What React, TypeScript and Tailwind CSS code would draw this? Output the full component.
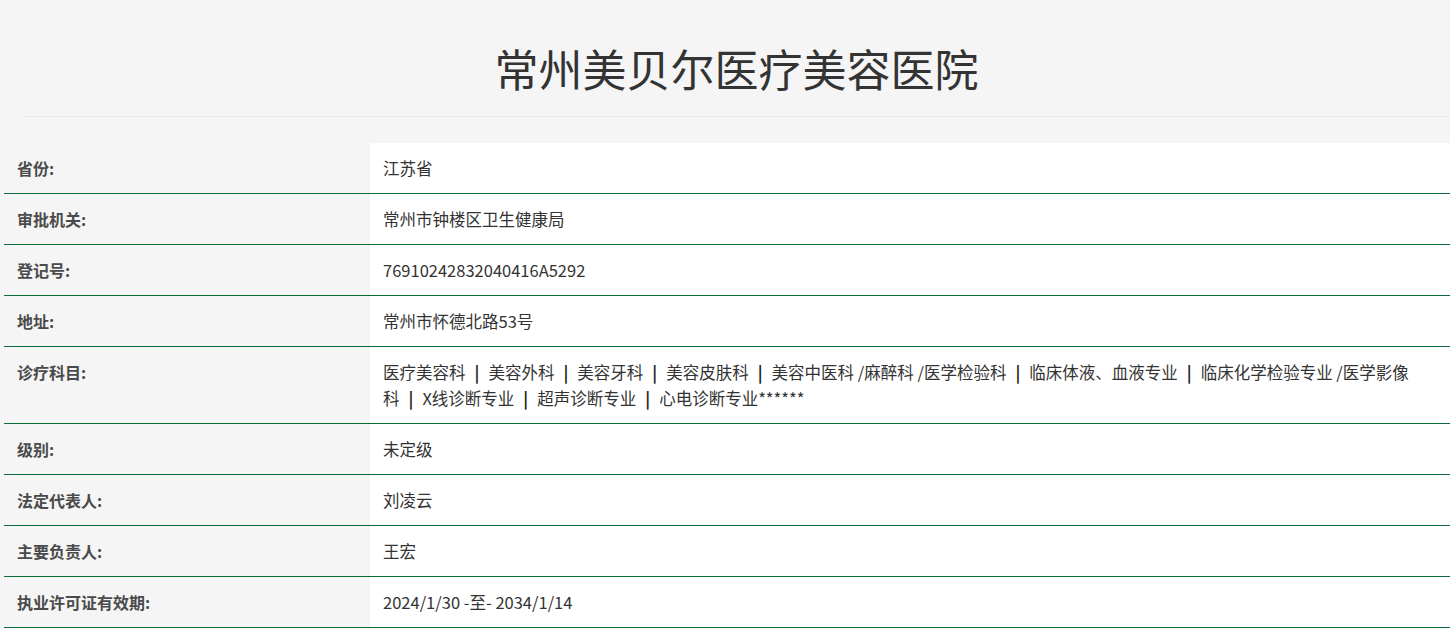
const rows: [string, string][] = [
  ["省份:", "江苏省"],
  ["审批机关:", "常州市钟楼区卫生健康局"],
  ["登记号:", "76910242832040416A5292"],
  ["地址:", "常州市怀德北路53号"],
  [
    "诊疗科目:",
    "医疗美容科|美容外科|美容牙科|美容皮肤科|美容中医科 /麻醉科 /医学检验科|临床体液、血液专业|临床化学检验专业 /医学影像科|X线诊断专业|超声诊断专业|心电诊断专业******",
  ],
  ["级别:", "未定级"],
  ["法定代表人:", "刘凌云"],
  ["主要负责人:", "王宏"],
  ["执业许可证有效期:", "2024/1/30 -至- 2034/1/14"],
];

function Value({ text }: { text: string }) {
  const parts = text.split("|");
  return (
    <>
      {parts.map((p, i) => (
        <span key={i}>
          {i > 0 && <span className="mx-[9px] font-bold text-[#222]">|</span>}
          {p}
        </span>
      ))}
    </>
  );
}

export default function App() {
  return (
    <div
      className="min-h-[629px] bg-[#f5f5f5] text-[#333]"
      style={{ fontFamily: '"Noto Sans CJK SC","Noto Sans",sans-serif' }}
    >
      <div className="ml-[23px] flex h-[117px] items-center justify-center border-b border-[#e8e8e8] pt-[20px]">
        <h1 className="text-[44px] font-normal text-[#333]">常州美贝尔医疗美容医院</h1>
      </div>
      <div className="mt-[26px] ml-[4px]">
        {rows.map(([label, value]) => (
          <div key={label} className="flex border-b border-[#0b6b3a]">
            <div className="w-[366px] shrink-0 bg-[#f5f5f5] px-[13px] py-[12px] text-[16px] font-bold leading-[26px] text-[#4a4a4a]">
              {label}
            </div>
            <div className="flex-1 bg-white py-[12px] pl-[13px] pr-[8px] text-[16.5px] leading-[26px] text-[#333]">
              <Value text={value} />
            </div>
          </div>
        ))}
      </div>
    </div>
  );
}
